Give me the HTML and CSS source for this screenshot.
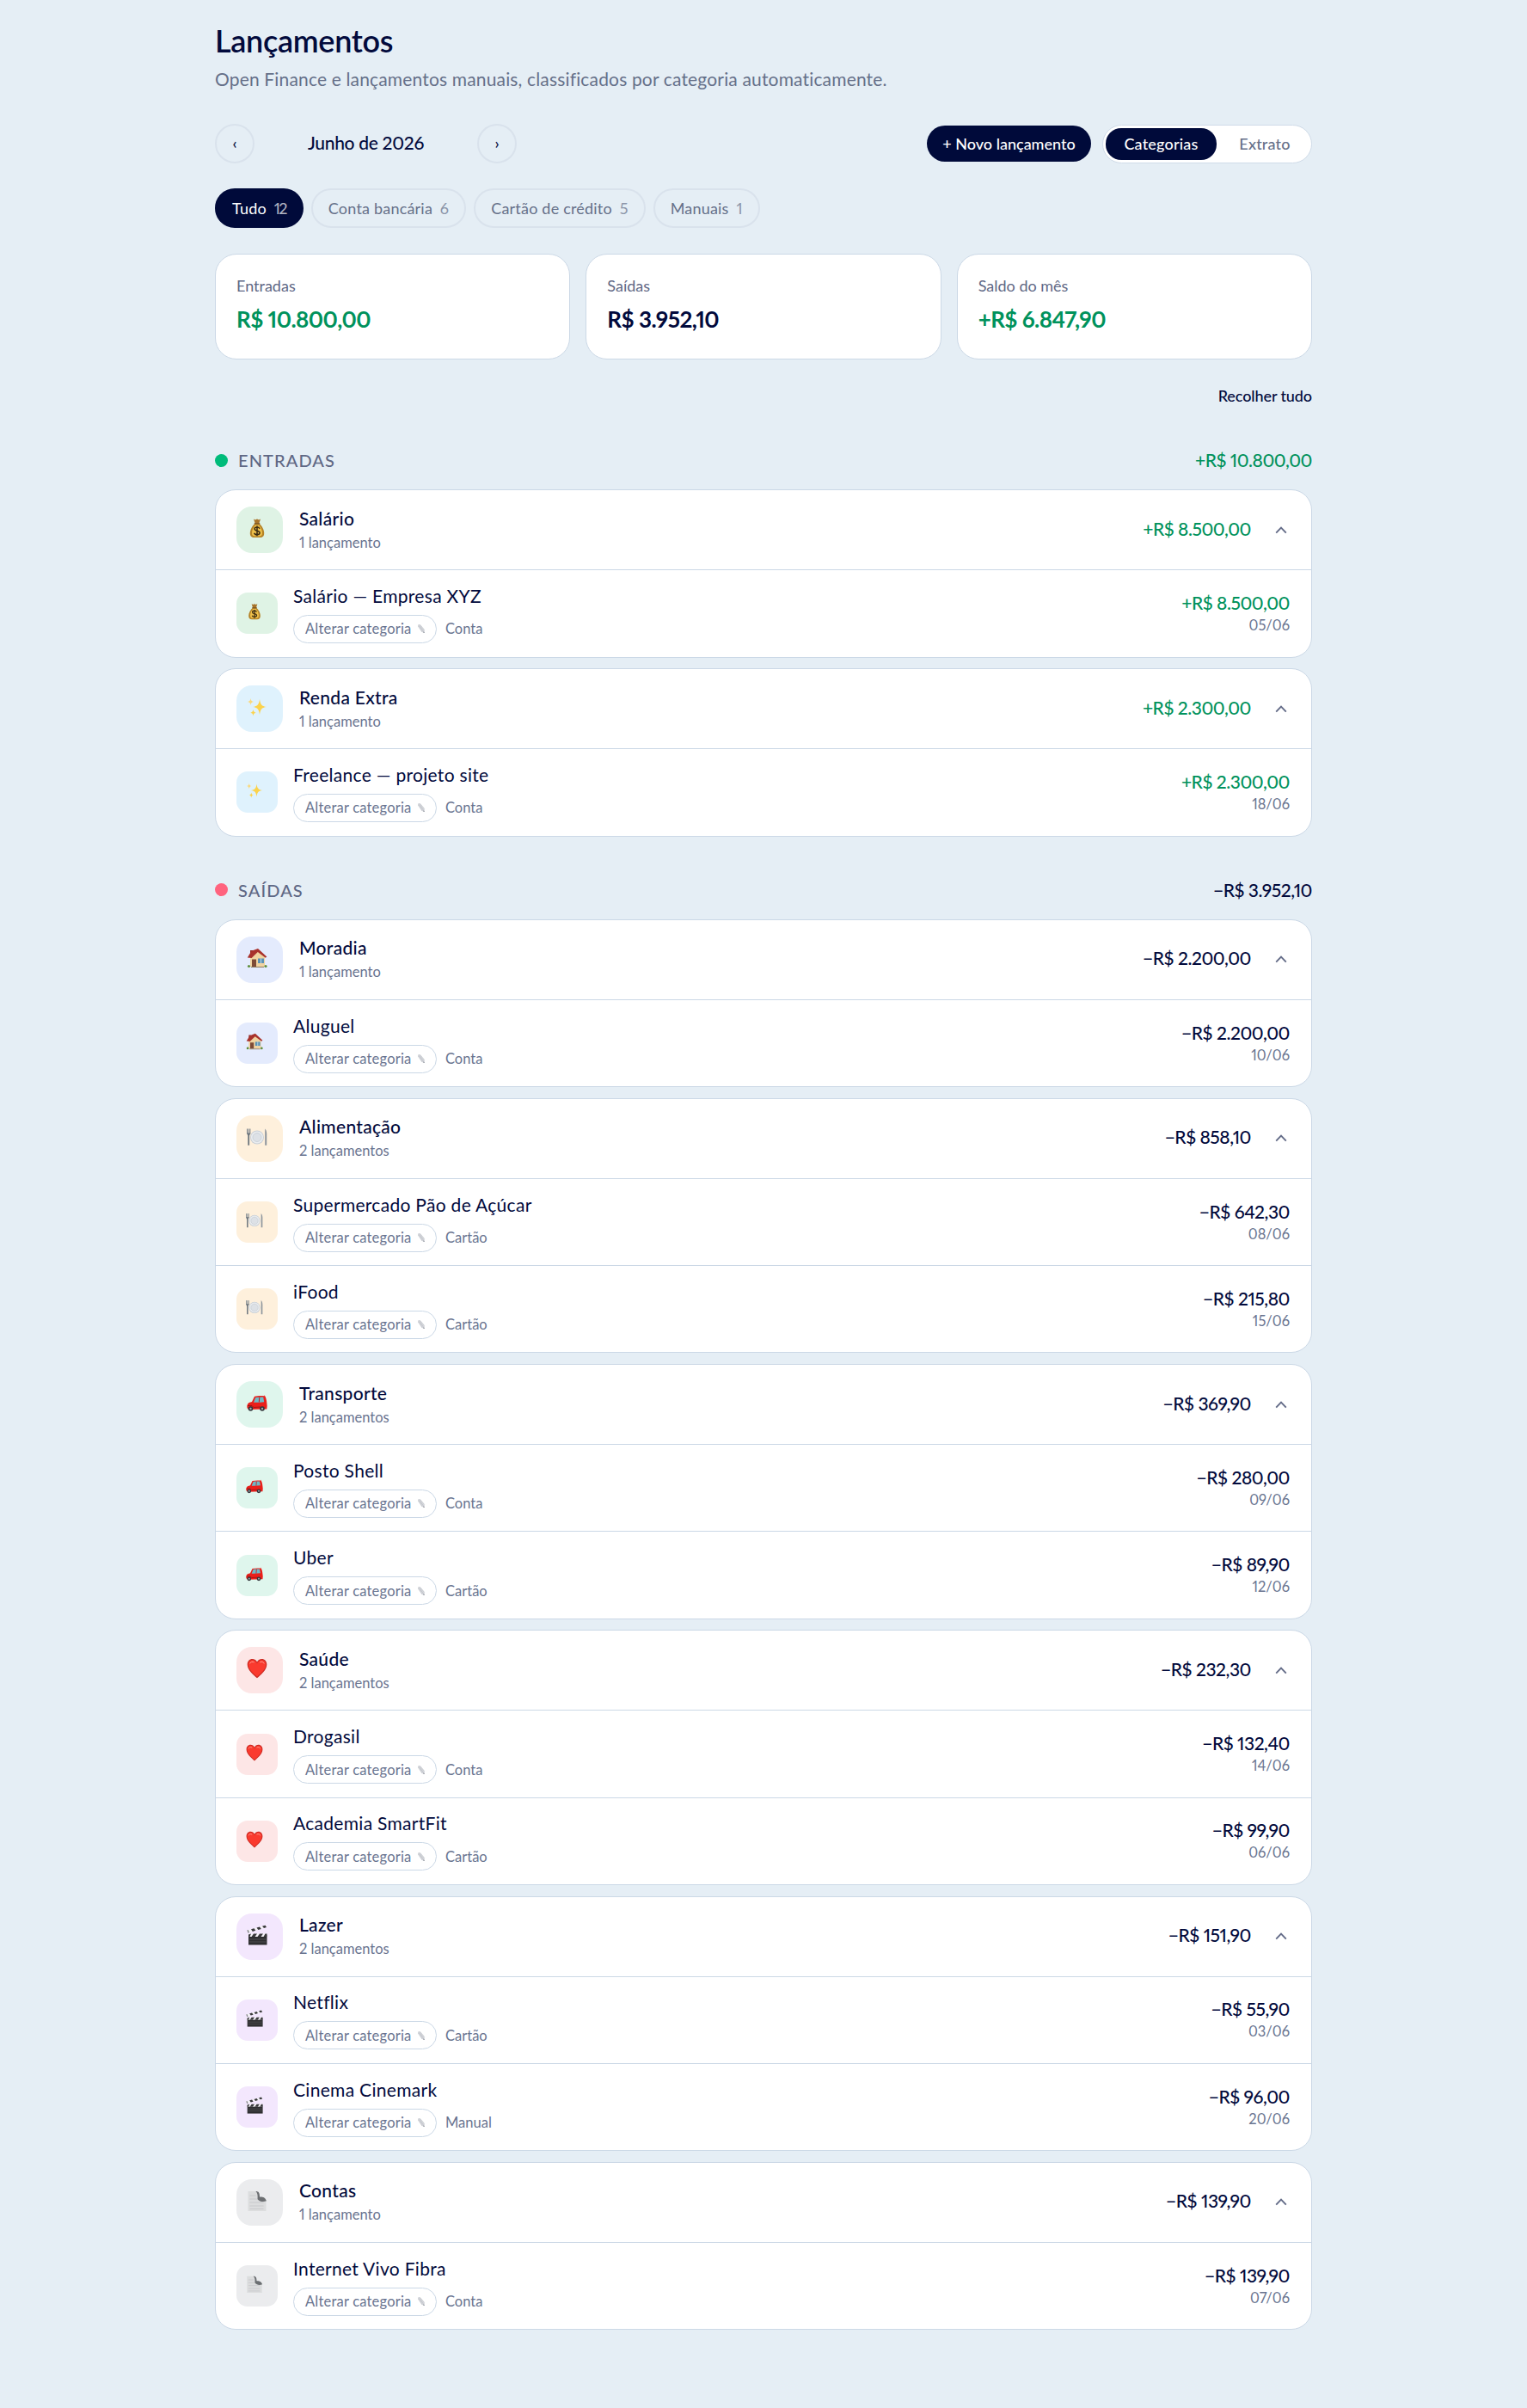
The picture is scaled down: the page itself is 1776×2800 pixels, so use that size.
FILE: index.html
```html
<!DOCTYPE html>
<html lang="pt-BR">
<head>
    <meta charset="UTF-8">
    <meta name="viewport" content="width=device-width, initial-scale=1.0">
    <title>Lançamentos</title>
    <link rel="stylesheet" href="styles.css">
</head>
<body>
    <!-- ícones das categorias -->
    <svg class="sprite" width="0" height="0">
        <symbol id="salario" viewBox="0 0 24 24">
            <path d="M8 1.5l2 1 2-1 2 1 2-1-1.6 5h-4.8z" fill="#a8742a"/>
            <path d="M9.3 7h5.4c3 2.600 5.500 7 5.500 11 0 3.600-1.800 5-4.600 5H8.400c-2.800 0-4.600-1.400-4.600-5 0-4 2.500-8.400 5.500-11z" fill="#b58327"/>
            <path d="M10 8.500h4c2.200 2.400 4 6 4 9.300 0 2.500-1.200 3.700-3.200 3.700H9.200C7.200 21.500 6 20.300 6 17.800c0-3.300 1.800-6.900 4-9.300z" fill="#eec04a"/>
            <path d="M8.800 6.800h6.400" stroke="#7c5420" stroke-width="1.400"/>
            <path d="M15 12.700c-.5-1.200-1.600-1.700-3-1.700-1.700 0-2.900.8-2.900 2.100 0 3 6 1.300 6 4.400 0 1.400-1.300 2.200-3.100 2.200-1.600 0-2.900-.6-3.300-2M12 9.600v11.600" fill="none" stroke="#3a2a10" stroke-width="1.500"/>
        </symbol>
        <symbol id="renda" viewBox="0 0 24 24">
            <path d="M15 3c.8 6 2.300 8.200 8 9-5.700.8-7.200 3-8 9-.8-6-2.300-8.200-8-9 5.700-.8 7.200-3 8-9z" fill="#fbd34d"/>
            <path d="M4.500 2c.4 2.600 1 3.600 3.500 4-2.500.4-3.100 1.400-3.500 4-.4-2.600-1-3.600-3.500-4 2.500-.4 3.100-1.400 3.500-4z" fill="#fbd97a"/>
            <path d="M7.500 15c.4 2.400 1 3.300 3.200 3.700-2.200.4-2.800 1.300-3.200 3.700-.4-2.400-1-3.300-3.200-3.700 2.200-.4 2.800-1.300 3.200-3.700z" fill="#fbd34d"/>
        </symbol>
        <symbol id="moradia" viewBox="0 0 24 24">
            <path d="M4 3h3v5H4z" fill="#8f2f2a"/>
            <path d="M4 10.500l9.500-7 7.500 7V22H4z" fill="#f0d3a0"/>
            <path d="M.8 11.500L5.500 3.800 13 1l10.300 9.600-1.500 1.200L12.800 5 5.600 12z" fill="#a8322c"/>
            <path d="M6 13.500h5V22H6z" fill="#7d4a36"/>
            <path d="M13 12.500h7v5.500h-7z" fill="#5c93b5"/>
            <path d="M16.500 12.500V18" stroke="#dcecf4" stroke-width=".8"/>
            <circle cx="2.500" cy="21.500" r="1.600" fill="#5f8f3d"/>
            <circle cx="22" cy="21.500" r="1.600" fill="#5f8f3d"/>
            <path d="M5 22.500h15" stroke="#8c7a60"/>
        </symbol>
        <symbol id="alimentacao" viewBox="0 0 24 24">
            <circle cx="12" cy="12.500" r="8" fill="#c9cfd6"/>
            <circle cx="12" cy="12.500" r="7.100" fill="#e9ecef"/>
            <circle cx="12" cy="12.500" r="5" fill="#dde1e6" stroke="#bcc4cc" stroke-width=".6"/>
            <path d="M.5 2.500v6M2.200 2.500v6M3.900 2.500v6" stroke="#7a838b" stroke-width="1"/>
            <path d="M0 7.500h4.400L3.100 10.500v11.300H1.300V10.500z" fill="#6b747c"/>
            <path d="M21.200 2.500c1.900 1.500 2.200 5 2 8.500v10.800h-2z" fill="#8d959d"/>
        </symbol>
        <symbol id="transporte" viewBox="0 0 24 24">
            <path d="M9 4.800C12 4 16 4 20.500 4.200L20.500 3l.8 1.500c1.200 2 1.700 4.500 2 7.500.5 2.500.5 5 0 7.500L3 20c-1.500-.5-2.700-1.500-2.700-3 0-2 .7-3.800 2-4.700C3.500 11.500 5 11.300 6 11z" fill="#ea1f1a"/>
            <path d="M10.200 6c3-.7 6-.7 9-.5l1 5.700c-4 .5-8 .6-12.200.5z" fill="#6fb9c6"/>
            <path d="M14.800 5.500l-.5 6" stroke="#c5191a"/>
            <path d="M1 15.500h5l2 2 8-.5" stroke="#991313" stroke-width=".9" fill="none"/>
            <circle cx="4.500" cy="19" r="2.800" fill="#33353a"/>
            <circle cx="4.500" cy="19" r="1.200" fill="#a4a8ad"/>
            <circle cx="18" cy="19" r="2.800" fill="#33353a"/>
            <circle cx="18" cy="19" r="1.200" fill="#a4a8ad"/>
        </symbol>
        <symbol id="saude" viewBox="0 0 24 24">
            <path d="M12 23.300C8 19.500.7 14 .7 7.400.7 3.700 3.300 1 6.500 1 9 1 11 2.300 12 4.600 13 2.300 15 1 17.500 1c3.200 0 5.800 2.700 5.800 6.400 0 6.600-7.300 12.100-11.300 15.900z" fill="#c92a22"/>
            <path d="M12 21.800C8 18.100 1.800 13.300 1.800 7.500 1.800 4.400 3.900 2.200 6.500 2.200c2.600 0 4.500 1.600 5.500 4.400 1-2.800 2.900-4.400 5.500-4.400 2.600 0 4.700 2.200 4.700 5.300 0 5.800-6.200 10.600-10.200 14.300z" fill="#fa3a2e"/>
            <path d="M3.800 6c.7-1.600 2.800-2.300 4.500-1.200M15.500 4.700c1.800-1 4-.2 4.600 1.400" fill="none" stroke="#ff9c90" stroke-linecap="round"/>
        </symbol>
        <symbol id="lazer" viewBox="0 0 24 24">
            <path d="M.3 6.500L22.500.5l.6 2.500L1.500 9.500z" fill="#f4f2f6"/>
            <path d="M5 5.200l3.500-1 1.800 2.600-3.500 1.100zM11.500 3.500L15 2.500l1.800 2.400-3.500 1zM18 1.700l3.500-1L23 3l-3 .9z" fill="#38383a"/>
            <path d="M.3 6.500l1.500-.4L3 9.300l-1.500.5z" fill="#8a8a8e"/>
            <path d="M2 12h21.500v11.500H2z" fill="#2e2e30"/>
            <path d="M2 10.500h21.500V14H2z" fill="#f4f2f6"/>
            <path d="M2 11.500L5 10.500 3.500 14H2zM8 10.500h4L9.500 14h-4zM15 10.500h4L16.500 14h-4zM21.500 10.500h2V14h-4z" fill="#38383a"/>
            <path d="M3 17h19.500M3 20h19.500" stroke="#67676a" stroke-width=".6"/>
        </symbol>
        <symbol id="contas" viewBox="0 0 24 24">
            <path d="M1.500 1H12l1 8.500 9.500 1.500V24h-21z" fill="#dcddde"/>
            <path d="M10.500 1c3.500 0 4.500 2 4.500 6.500 3-.4 7.200.8 7.800 4.800-3.500 1.500-7.500 1-10.300-2 .3-4 .2-7-2-9.300z" fill="#6c6f72"/>
            <path d="M3.500 6h7M3.500 10h8M3.500 14h16M3.500 18h16M3.500 21.500h16" stroke="#c5c7c9" stroke-width=".9"/>
        </symbol>
        <symbol id="lapis" viewBox="0 0 10 12">
            <path d="M1 2.200C1.200.8 2.800.6 3.600 1.400l5.100 6L9 11 5.800 10z" fill="#d5d7dc"/>
            <path d="M2.500 2.500l4.800 6.300M3.600 1.400l5 6M1.200 3l4.700 6.800" stroke="#adb0b9" stroke-width=".5"/>
            <path d="M7.500 9.300l1.500 1.700-1.800-.5z" fill="#777b85"/>
        </symbol>
        <symbol id="seta" viewBox="0 0 14 9">
            <path d="M1.200 7.700L7 1.700l5.800 6" fill="none" stroke="#646c88" stroke-width="1.900"/>
        </symbol>
    </svg>

    <main class="page">
        <h1>Lançamentos</h1>
        <p class="subtitle">Open Finance e lançamentos manuais, classificados por categoria automaticamente.</p>

        <div class="toolbar">
            <div class="month">
                <button class="round">‹</button>
                <span class="month-name">Junho de 2026</span>
                <button class="round">›</button>
            </div>
            <div class="actions">
                <button class="new">+ Novo lançamento</button>
                <div class="switch">
                    <button class="active">Categorias</button>
                    <button>Extrato</button>
                </div>
            </div>
        </div>

        <div class="filters">
            <button class="chip active">Tudo <span>12</span></button>
            <button class="chip">Conta bancária <span>6</span></button>
            <button class="chip">Cartão de crédito <span>5</span></button>
            <button class="chip">Manuais <span>1</span></button>
        </div>

        <div class="summary">
            <div class="card"><p>Entradas</p><strong class="green">R$ 10.800,00</strong></div>
            <div class="card"><p>Saídas</p><strong>R$ 3.952,10</strong></div>
            <div class="card"><p>Saldo do mês</p><strong class="green">+R$ 6.847,90</strong></div>
        </div>

        <button class="collapse">Recolher tudo</button>

        <section>
            <div class="section-head">
                <i class="dot in"></i><h2>Entradas</h2><span class="amount green">+R$ 10.800,00</span>
            </div>

            <div class="group salario">
                <div class="group-head">
                    <div class="icon"><svg><use href="#salario"/></svg></div>
                    <div class="info"><h3>Salário</h3><small>1 lançamento</small></div>
                    <span class="amount green">+R$ 8.500,00</span>
                    <svg class="arrow"><use href="#seta"/></svg>
                </div>
                <div class="row">
                    <div class="icon"><svg><use href="#salario"/></svg></div>
                    <div class="info"><h4>Salário — Empresa XYZ</h4><div class="meta"><button>Alterar categoria <svg><use href="#lapis"/></svg></button><small>Conta</small></div></div>
                    <div class="value"><span class="amount green">+R$ 8.500,00</span><small>05/06</small></div>
                </div>
            </div>

            <div class="group renda">
                <div class="group-head">
                    <div class="icon"><svg><use href="#renda"/></svg></div>
                    <div class="info"><h3>Renda Extra</h3><small>1 lançamento</small></div>
                    <span class="amount green">+R$ 2.300,00</span>
                    <svg class="arrow"><use href="#seta"/></svg>
                </div>
                <div class="row">
                    <div class="icon"><svg><use href="#renda"/></svg></div>
                    <div class="info"><h4>Freelance — projeto site</h4><div class="meta"><button>Alterar categoria <svg><use href="#lapis"/></svg></button><small>Conta</small></div></div>
                    <div class="value"><span class="amount green">+R$ 2.300,00</span><small>18/06</small></div>
                </div>
            </div>
        </section>

        <section>
            <div class="section-head">
                <i class="dot out"></i><h2>Saídas</h2><span class="amount">−R$ 3.952,10</span>
            </div>

            <div class="group moradia">
                <div class="group-head">
                    <div class="icon"><svg><use href="#moradia"/></svg></div>
                    <div class="info"><h3>Moradia</h3><small>1 lançamento</small></div>
                    <span class="amount">−R$ 2.200,00</span>
                    <svg class="arrow"><use href="#seta"/></svg>
                </div>
                <div class="row">
                    <div class="icon"><svg><use href="#moradia"/></svg></div>
                    <div class="info"><h4>Aluguel</h4><div class="meta"><button>Alterar categoria <svg><use href="#lapis"/></svg></button><small>Conta</small></div></div>
                    <div class="value"><span class="amount">−R$ 2.200,00</span><small>10/06</small></div>
                </div>
            </div>

            <div class="group alimentacao">
                <div class="group-head">
                    <div class="icon"><svg><use href="#alimentacao"/></svg></div>
                    <div class="info"><h3>Alimentação</h3><small>2 lançamentos</small></div>
                    <span class="amount">−R$ 858,10</span>
                    <svg class="arrow"><use href="#seta"/></svg>
                </div>
                <div class="row">
                    <div class="icon"><svg><use href="#alimentacao"/></svg></div>
                    <div class="info"><h4>Supermercado Pão de Açúcar</h4><div class="meta"><button>Alterar categoria <svg><use href="#lapis"/></svg></button><small>Cartão</small></div></div>
                    <div class="value"><span class="amount">−R$ 642,30</span><small>08/06</small></div>
                </div>
                <div class="row">
                    <div class="icon"><svg><use href="#alimentacao"/></svg></div>
                    <div class="info"><h4>iFood</h4><div class="meta"><button>Alterar categoria <svg><use href="#lapis"/></svg></button><small>Cartão</small></div></div>
                    <div class="value"><span class="amount">−R$ 215,80</span><small>15/06</small></div>
                </div>
            </div>

            <div class="group transporte">
                <div class="group-head">
                    <div class="icon"><svg><use href="#transporte"/></svg></div>
                    <div class="info"><h3>Transporte</h3><small>2 lançamentos</small></div>
                    <span class="amount">−R$ 369,90</span>
                    <svg class="arrow"><use href="#seta"/></svg>
                </div>
                <div class="row">
                    <div class="icon"><svg><use href="#transporte"/></svg></div>
                    <div class="info"><h4>Posto Shell</h4><div class="meta"><button>Alterar categoria <svg><use href="#lapis"/></svg></button><small>Conta</small></div></div>
                    <div class="value"><span class="amount">−R$ 280,00</span><small>09/06</small></div>
                </div>
                <div class="row">
                    <div class="icon"><svg><use href="#transporte"/></svg></div>
                    <div class="info"><h4>Uber</h4><div class="meta"><button>Alterar categoria <svg><use href="#lapis"/></svg></button><small>Cartão</small></div></div>
                    <div class="value"><span class="amount">−R$ 89,90</span><small>12/06</small></div>
                </div>
            </div>

            <div class="group saude">
                <div class="group-head">
                    <div class="icon"><svg><use href="#saude"/></svg></div>
                    <div class="info"><h3>Saúde</h3><small>2 lançamentos</small></div>
                    <span class="amount">−R$ 232,30</span>
                    <svg class="arrow"><use href="#seta"/></svg>
                </div>
                <div class="row">
                    <div class="icon"><svg><use href="#saude"/></svg></div>
                    <div class="info"><h4>Drogasil</h4><div class="meta"><button>Alterar categoria <svg><use href="#lapis"/></svg></button><small>Conta</small></div></div>
                    <div class="value"><span class="amount">−R$ 132,40</span><small>14/06</small></div>
                </div>
                <div class="row">
                    <div class="icon"><svg><use href="#saude"/></svg></div>
                    <div class="info"><h4>Academia SmartFit</h4><div class="meta"><button>Alterar categoria <svg><use href="#lapis"/></svg></button><small>Cartão</small></div></div>
                    <div class="value"><span class="amount">−R$ 99,90</span><small>06/06</small></div>
                </div>
            </div>

            <div class="group lazer">
                <div class="group-head">
                    <div class="icon"><svg><use href="#lazer"/></svg></div>
                    <div class="info"><h3>Lazer</h3><small>2 lançamentos</small></div>
                    <span class="amount">−R$ 151,90</span>
                    <svg class="arrow"><use href="#seta"/></svg>
                </div>
                <div class="row">
                    <div class="icon"><svg><use href="#lazer"/></svg></div>
                    <div class="info"><h4>Netflix</h4><div class="meta"><button>Alterar categoria <svg><use href="#lapis"/></svg></button><small>Cartão</small></div></div>
                    <div class="value"><span class="amount">−R$ 55,90</span><small>03/06</small></div>
                </div>
                <div class="row">
                    <div class="icon"><svg><use href="#lazer"/></svg></div>
                    <div class="info"><h4>Cinema Cinemark</h4><div class="meta"><button>Alterar categoria <svg><use href="#lapis"/></svg></button><small>Manual</small></div></div>
                    <div class="value"><span class="amount">−R$ 96,00</span><small>20/06</small></div>
                </div>
            </div>

            <div class="group contas">
                <div class="group-head">
                    <div class="icon"><svg><use href="#contas"/></svg></div>
                    <div class="info"><h3>Contas</h3><small>1 lançamento</small></div>
                    <span class="amount">−R$ 139,90</span>
                    <svg class="arrow"><use href="#seta"/></svg>
                </div>
                <div class="row">
                    <div class="icon"><svg><use href="#contas"/></svg></div>
                    <div class="info"><h4>Internet Vivo Fibra</h4><div class="meta"><button>Alterar categoria <svg><use href="#lapis"/></svg></button><small>Conta</small></div></div>
                    <div class="value"><span class="amount">−R$ 139,90</span><small>07/06</small></div>
                </div>
            </div>
        </section>
    </main>
</body>
</html>
```

FILE: styles.css
```css
* {
    box-sizing: border-box;
    margin: 0;
    padding: 0;
}

body {
    background-color: #e5eef5;
    color: #020a3c;
    font-family: Lato, "Open Sans", sans-serif;
    font-size: 18px;
    font-variant-ligatures: none;
    font-variant-numeric: proportional-nums;
}

button {
    font: inherit;
    font-variant-ligatures: none;
    font-variant-numeric: proportional-nums;
    color: inherit;
    background: none;
    border: none;
    white-space: nowrap;
}

.sprite {
    display: block;
}

.page {
    width: 1276px;
    margin: 0 auto;
    padding-top: 24px;
}

h1 {
    font-size: 36px;
    font-weight: 600;
    line-height: 46px;
    letter-spacing: -0.3px;
}

.subtitle {
    margin-top: 6px;
    font-size: 21px;
    line-height: 32px;
    letter-spacing: 0.16px;
    color: #657089;
}

/* barra do mês e ações */
.toolbar {
    display: flex;
    justify-content: space-between;
    align-items: center;
    margin-top: 36px;
    height: 46px;
}

.month {
    display: flex;
    align-items: center;
}

.month-name {
    width: 259px;
    padding-bottom: 3px;
    text-align: center;
    font-size: 21px;
    font-weight: 500;
    letter-spacing: -0.3px;
}

.round {
    width: 46px;
    height: 46px;
    padding-bottom: 2px;
    border: 2px solid #d9e2ec;
    border-radius: 50%;
    font-weight: 500;
}

.actions {
    display: flex;
    align-items: center;
    gap: 13px;
    font-weight: 500;
}

.new {
    width: 191px;
    height: 42px;
    border-radius: 21px;
    background-color: #000a3a;
    color: #fff;
}

.switch {
    display: flex;
    width: 244px;
    height: 45px;
    padding: 3px;
    border: 1px solid #cfdbe8;
    border-radius: 23px;
    background-color: #fff;
}

.switch button {
    flex: 1;
    padding-left: 5px;
    color: #657089;
    letter-spacing: 0.2px;
}

.switch .active {
    flex: none;
    width: 129px;
    padding: 0;
    border-radius: 18px;
    background-color: #000a3a;
    color: #fff;
}

/* filtros */
.filters {
    display: flex;
    gap: 9px;
    margin-top: 29px;
}

.chip {
    height: 46px;
    padding: 0 18px;
    border: 2px solid #d9e2ec;
    border-radius: 23px;
    color: #657089;
    letter-spacing: 0.2px;
}

.chip span {
    margin-left: 4px;
    opacity: 0.7;
}

.chip.active {
    background-color: #000a3a;
    border-color: #000a3a;
    color: #fff;
}

.chip.active span {
    letter-spacing: -1.6px;
}

/* resumo */
.summary {
    display: grid;
    grid-template-columns: repeat(3, 1fr);
    gap: 18px;
    margin-top: 30px;
}

.card {
    height: 123px;
    padding: 24px 24px;
    border: 1px solid #cbd8e6;
    border-radius: 25px;
    background-color: #fff;
}

.card p {
    line-height: 25px;
    color: #5f6885;
}

.card strong {
    display: block;
    margin-top: 9px;
    font-size: 26px;
    line-height: 34px;
    letter-spacing: -0.55px;
}

.collapse {
    display: block;
    margin: 29px 0 0 auto;
    line-height: 26px;
    font-weight: 500;
    letter-spacing: -0.1px;
}

/* seções */
section {
    margin-top: 45px;
}

.section-head {
    display: flex;
    align-items: center;
    height: 34px;
    margin-bottom: 17.3px;
}

.dot {
    width: 15px;
    height: 15px;
    margin-right: 12px;
    border-radius: 50%;
}

.dot.in {
    background-color: #00bb7a;
}

.dot.out {
    background-color: #ff637e;
}

h2 {
    flex: 1;
    font-size: 20px;
    font-weight: 500;
    letter-spacing: 1.1px;
    text-transform: uppercase;
    color: #5f6885;
}

.amount {
    font-size: 21px;
    font-weight: 500;
    line-height: 28px;
    letter-spacing: -0.45px;
}

.green {
    color: #00925c;
}

small {
    font-size: 16.5px;
    line-height: 22px;
    color: #697490;
}

.group {
    border: 1px solid #cbd8e6;
    border-radius: 24px;
    background-color: #fff;
}

.group + .group {
    margin-top: 12.7px;
}

.group-head {
    display: flex;
    align-items: center;
    height: 92px;
    padding: 0 25px 0 24px;
}

.group-head .amount {
    margin-bottom: 3px;
}

.group-head .info {
    margin: 0 0 2px 19px;
}

.info {
    flex: 1;
}

.info small {
    display: block;
}

.group-head small {
    margin-top: 3px;
}

h3, h4 {
    font-size: 21px;
    line-height: 28px;
    font-weight: 500;
    letter-spacing: 0.3px;
}

h4 {
    font-weight: 400;
}

.icon {
    display: flex;
    align-items: center;
    justify-content: center;
    width: 54px;
    height: 54px;
    padding: 0 6px 4px 0;
    border-radius: 18px;
}

.icon svg {
    width: 24px;
    height: 24px;
}

.arrow {
    width: 14px;
    height: 9px;
    margin: 0 3px 0 28px;
}

.row {
    display: flex;
    align-items: center;
    height: 101.3px;
    padding: 0 25px 0 24px;
    border-top: 1px solid #cbd8e6;
}

.row .icon {
    width: 48px;
    height: 48px;
    border-radius: 13px;
}

.row .icon svg {
    width: 20px;
    height: 20px;
}

.row .info {
    margin-left: 18px;
}

.meta {
    display: flex;
    align-items: center;
    gap: 10px;
    margin-top: 8px;
}

.meta button {
    display: flex;
    align-items: center;
    justify-content: space-between;
    width: 167px;
    height: 33px;
    padding: 0 12px 0 13px;
    border: 1px solid #cbd8e6;
    border-radius: 17px;
    font-size: 16.5px;
    letter-spacing: 0.2px;
    color: #697490;
}

.meta svg {
    width: 10px;
    height: 12px;
}

.value {
    display: flex;
    flex-direction: column;
    align-items: flex-end;
    gap: 1px;
    padding-bottom: 2px;
}

/* cores das categorias */
.salario .icon {
    background-color: #dff3e5;
}

.renda .icon {
    background-color: #dff2fd;
}

.moradia .icon {
    background-color: #e4ebfd;
}

.alimentacao .icon {
    background-color: #fef0dc;
}

.transporte .icon {
    background-color: #dff6ed;
}

.saude .icon {
    background-color: #fde6e6;
}

.lazer .icon {
    background-color: #f3e7fd;
}

.contas .icon {
    background-color: #ebecee;
}
```
